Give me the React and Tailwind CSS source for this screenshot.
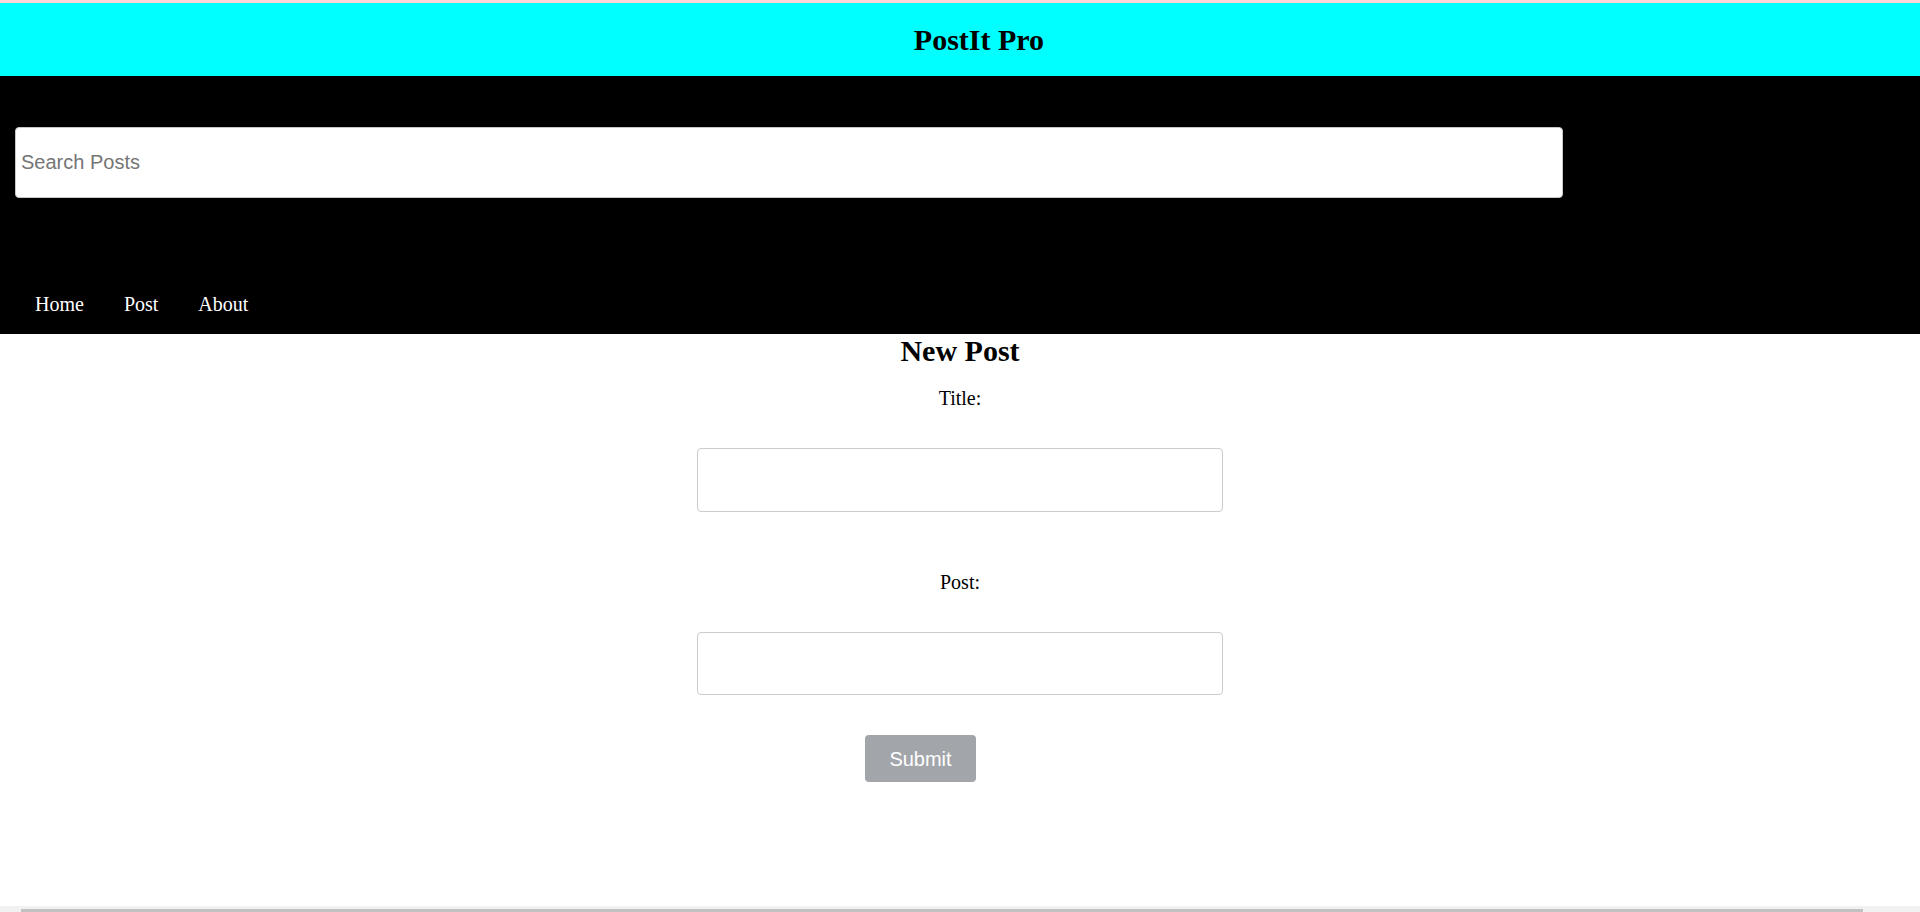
export default function App() {
  const serif = { fontFamily: '"Liberation Serif", "Times New Roman", serif' };
  const sans = { fontFamily: '"Liberation Sans", Arial, sans-serif' };
  return (
    <div className="h-[912px] w-full overflow-hidden flex flex-col bg-white" style={serif}>
      <div className="h-[3px] w-full shrink-0 bg-[#fcd6d9]" />
      <div className="flex-1 overflow-hidden">
        <div className="w-[1958px]">
          <header className="h-[73px] bg-[#00ffff] flex items-center justify-center">
            <h1 className="text-[30px] leading-none font-bold text-black">PostIt Pro</h1>
          </header>
          <div className="h-[258px] bg-black pt-[51px]">
            <input
              type="text"
              placeholder="Search Posts"
              className="ml-[15px] w-[1548px] h-[71px] bg-white rounded-[4px] border border-[#c8c8c8] px-[5px] text-[20px] text-black placeholder:text-[#757575] outline-none"
              style={sans}
            />
            <nav className="mt-[96px] pl-[35px] flex gap-[40px] text-white text-[20px] leading-none">
              <span>Home</span>
              <span>Post</span>
              <span>About</span>
            </nav>
          </div>
          <main className="w-[1920px] flex flex-col items-center text-black">
            <h2 className="mt-[2px] text-[30px] leading-none font-bold">New Post</h2>
            <label className="mt-[22px] text-[20px] leading-none">Title:</label>
            <input
              type="text"
              className="mt-[40px] w-[526px] h-[64px] rounded-[4px] border border-[#cccccc] bg-white outline-none"
            />
            <label className="mt-[60px] text-[20px] leading-none">Post:</label>
            <input
              type="text"
              className="mt-[40px] w-[526px] h-[63px] rounded-[4px] border border-[#cccccc] bg-white outline-none"
            />
            <div className="mt-[40px] w-[526px] flex">
              <button
                className="ml-[168px] w-[111px] h-[47px] rounded-[4px] bg-[#a2a6aa] text-white text-[20px] leading-none"
                style={sans}
              >
                Submit
              </button>
            </div>
          </main>
        </div>
      </div>
      <div className="h-[6px] w-full shrink-0 bg-[#f1f1f1] pt-[3px]">
        <div className="ml-[21px] w-[1842px] h-[3px] bg-[#c1c1c1]" />
      </div>
    </div>
  );
}
